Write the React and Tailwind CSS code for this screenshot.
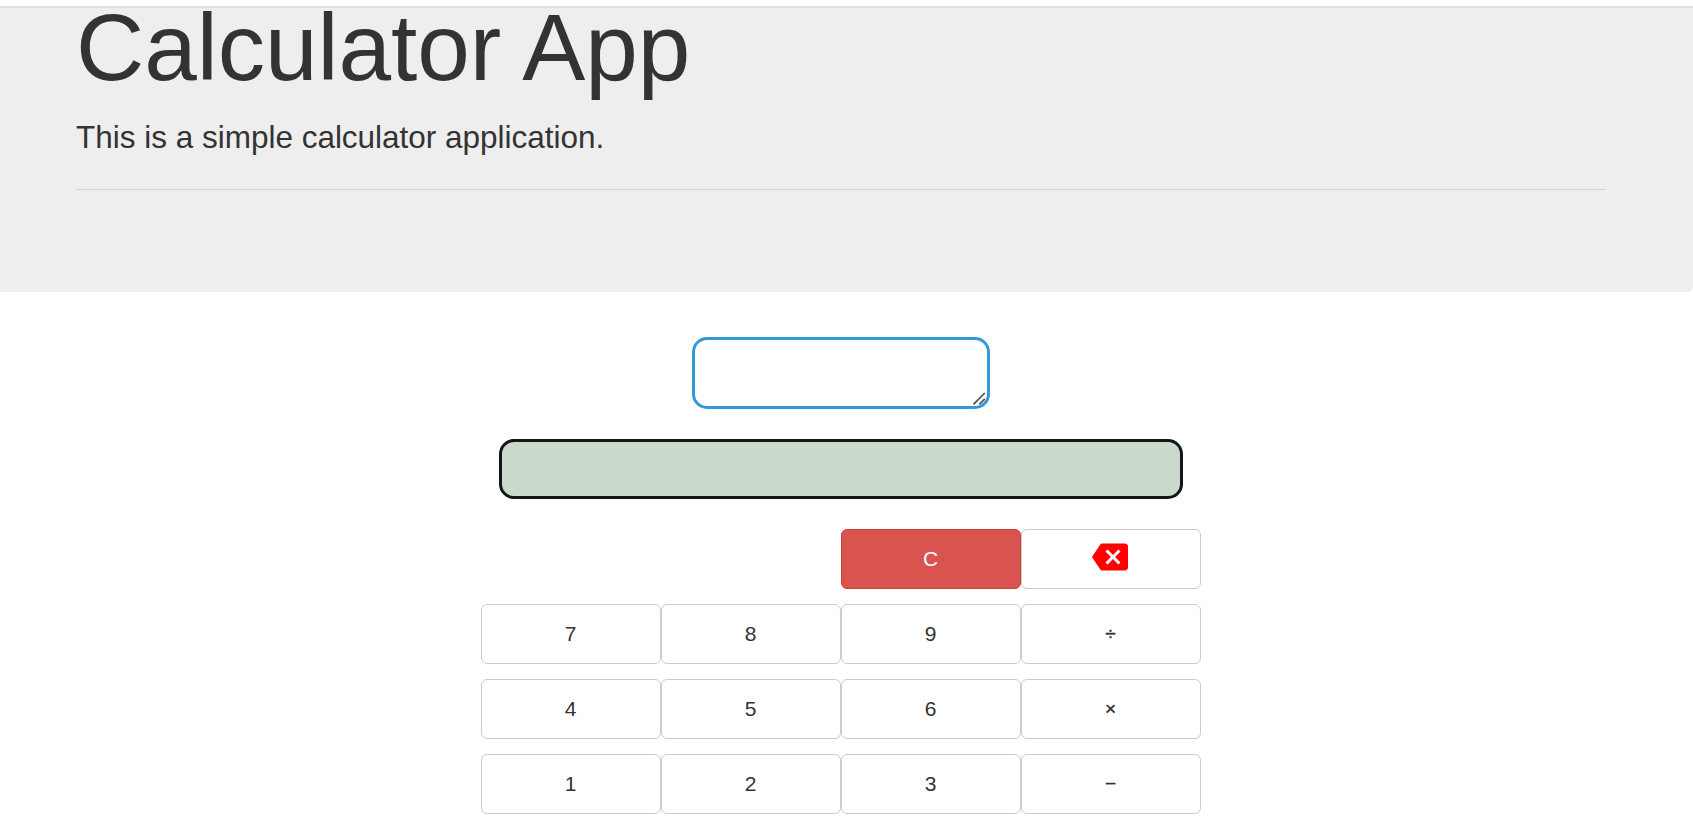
import { MdBackspace } from "react-icons/md";

const rows = [
  ["7", "8", "9", "÷"],
  ["4", "5", "6", "×"],
  ["1", "2", "3", "−"],
];

const operators = ["÷", "×", "−"];

function Key({ children, danger = false }) {
  return (
    <button
      type="button"
      className={
        "flex h-[60px] w-[180px] items-center justify-center rounded-md border pr-px text-[21px] leading-[30px] " +
        (danger
          ? "border-[#d43f3a] bg-[#d9534f] text-white"
          : "border-[#cccccc] bg-white text-[#333333]")
      }
    >
      {children}
    </button>
  );
}

function Header() {
  return (
    <header className="h-[284px] rounded-br-md bg-[#eeeeee] pl-[76px] pr-[87px] pt-px text-[#333333]">
      <h1 className="h-[76px] text-[94.5px] leading-[76px] tracking-[-0.02px]">Calculator App</h1>
      <p className="mt-[30px] text-[31.5px] leading-[44px] tracking-[-0.01px]">This is a simple calculator application.</p>
      <hr className="mt-[30px] border-0 border-t border-[#d5d5d5]" />
    </header>
  );
}

function ExpressionInput() {
  return (
    <div className="relative h-[72px] w-[298px]">
      <textarea
        aria-label="Expression"
        className="block h-full w-full resize-none rounded-[15px] border-[3px] border-[#3498db] bg-white outline-none"
      />
      <svg
        className="pointer-events-none absolute right-[4px] bottom-[4px] size-[13px]"
        viewBox="0 0 13 13"
        fill="none"
        stroke="#555555"
        strokeWidth="1.7"
      >
        <path d="M0.5 12.3 11.8 1M6.3 12.3 11.8 6.8" />
        <path d="M8.6 12.3 11 9.9" stroke="#8fa9bb" strokeWidth="1" />
      </svg>
    </div>
  );
}

export default function App() {
  return (
    <div className="flow-root h-[827px] overflow-hidden bg-white pt-[6px] font-['Liberation_Sans',Arial,sans-serif]">
      <div className="border-t-2 border-[#e1e1e1] bg-white">
        <Header />
      </div>
      <main className="ml-[481px] flex w-[720px] flex-col items-center pt-[45px]">
        <ExpressionInput />
        <div className="mt-[30px] h-[60px] w-[684px] rounded-[15px] border-[3px] border-[#151515] bg-[#c9d9cb]" />
        <div className="mt-[30px] flex w-full flex-col gap-[15px]">
          <div className="flex justify-end">
            <Key danger>C</Key>
            <Key>
              <MdBackspace className="mr-px mb-[5px] size-9 text-[#ff0000]" />
            </Key>
          </div>
          {rows.map((row) => (
            <div key={row[0]} className="flex">
              {row.map((label) => (
                <Key key={label}>
                  {operators.includes(label) ? (
                    <span className="text-[19px] [-webkit-text-stroke:0.4px_#333333]">{label}</span>
                  ) : (
                    label
                  )}
                </Key>
              ))}
            </div>
          ))}
        </div>
      </main>
    </div>
  );
}
